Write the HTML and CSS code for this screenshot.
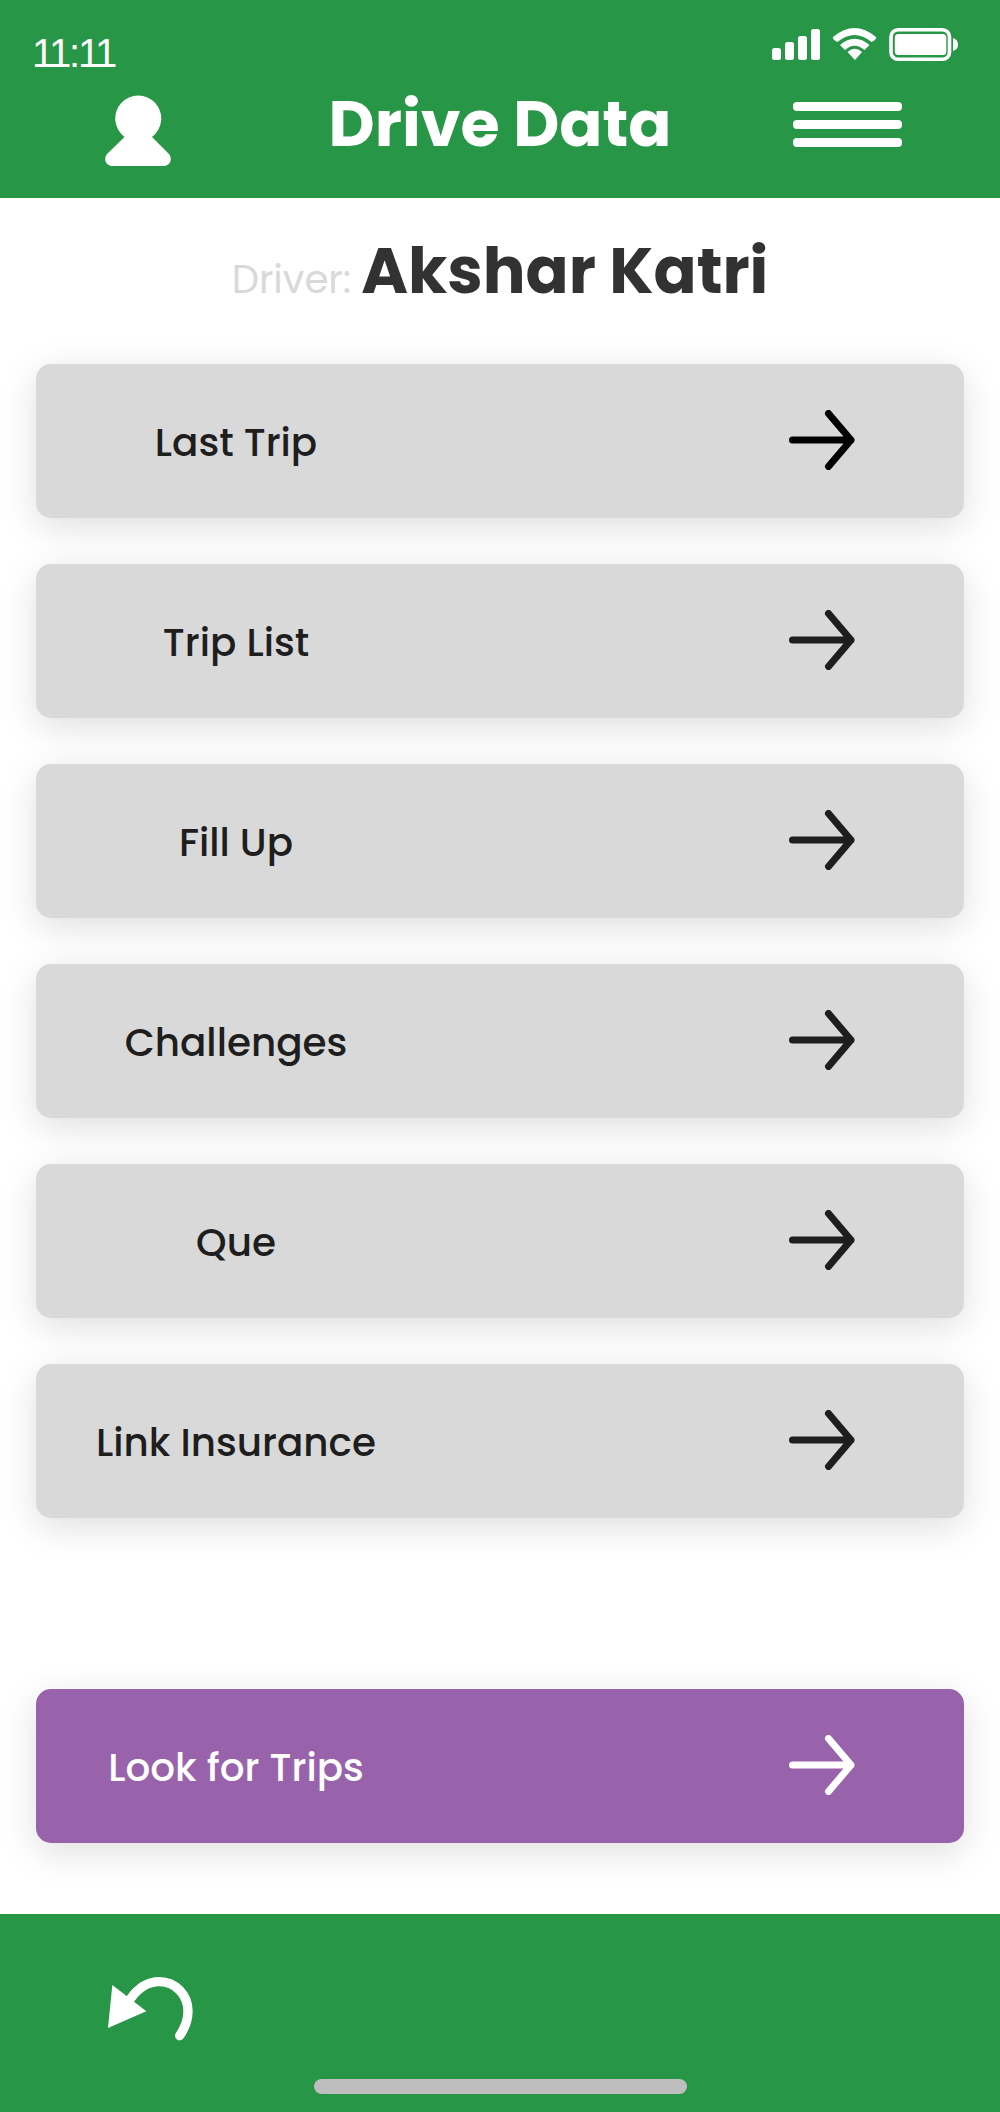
FILE: index.html
```html
<!DOCTYPE html>
<html lang="en">
<head>
    <meta charset="UTF-8">
    <meta name="viewport" content="width=device-width, initial-scale=1.0">
    <title>Drive Data</title>
    <link rel="stylesheet" href="styles.css">
</head>
<body>
    <header class="header">
        <div class="status-bar">
            <span class="time">11:11</span>
            <svg class="status-icons" width="188" height="34" viewBox="0 0 188 34" fill="white">
                <!-- signal -->
                <rect x="2" y="20" width="9" height="12" rx="2.5"/>
                <rect x="15" y="14" width="9" height="18" rx="2.5"/>
                <rect x="28" y="8" width="9" height="24" rx="2.5"/>
                <rect x="41" y="1" width="9" height="31" rx="2.5"/>
                <!-- wifi -->
                <path d="M63 9 Q84.5 -9 106 9 Q107 11 101.500 14 Q84.500 0 67.500 14 Q62 11 63 9Z"/>
                <path d="M70 17 Q84.500 4.500 99.500 17 L94.500 22 Q84.500 13.500 75 22Z"/>
                <path d="M77.500 24 Q84.800 17.500 92 24 L85 32Z"/>
                <!-- battery -->
                <rect x="121" y="1.800" width="58.500" height="29.500" rx="7" fill="none" stroke="white" stroke-width="3.600"/>
                <rect x="124.800" y="6" width="51.500" height="21" rx="3.500"/>
                <path d="M183 10 Q188 11.500 188 16.500 Q188 21.500 183 23Z"/>
            </svg>
        </div>
        <nav class="nav">
            <svg class="profile" width="66" height="71" viewBox="0 0 66 71" fill="white">
                <path d="M19.500 42 A23 23 0 1 1 47 42 L64 59 C68 64 65 71 58 71 H8 C1 71 -2 64 2 59Z"/>
            </svg>
            <h1>Drive Data</h1>
            <div class="menu">
                <span></span>
                <span></span>
                <span></span>
            </div>
        </nav>
    </header>

    <main class="container">
        <p class="driver">Driver: <strong>Akshar Katri</strong></p>

        <button class="first">
            <span>Last Trip</span>
            <svg class="arrow" viewBox="0 0 66 60"><path d="M3.500 30H62M39.500 3.500L62 30L39.500 56.500"/></svg>
        </button>
        <button>
            <span>Trip List</span>
            <svg class="arrow" viewBox="0 0 66 60"><path d="M3.500 30H62M39.500 3.500L62 30L39.500 56.500"/></svg>
        </button>
        <button>
            <span>Fill Up</span>
            <svg class="arrow" viewBox="0 0 66 60"><path d="M3.500 30H62M39.500 3.500L62 30L39.500 56.500"/></svg>
        </button>
        <button>
            <span>Challenges</span>
            <svg class="arrow" viewBox="0 0 66 60"><path d="M3.500 30H62M39.500 3.500L62 30L39.500 56.500"/></svg>
        </button>
        <button>
            <span>Que</span>
            <svg class="arrow" viewBox="0 0 66 60"><path d="M3.500 30H62M39.500 3.500L62 30L39.500 56.500"/></svg>
        </button>
        <button>
            <span>Link Insurance</span>
            <svg class="arrow" viewBox="0 0 66 60"><path d="M3.500 30H62M39.500 3.500L62 30L39.500 56.500"/></svg>
        </button>
        <button class="purple">
            <span>Look for Trips</span>
            <svg class="arrow" viewBox="0 0 66 60"><path d="M3.500 30H62M39.500 3.500L62 30L39.500 56.500"/></svg>
        </button>
    </main>

    <footer class="footer">
        <svg class="back" width="85" height="64" viewBox="145 233 255 192">
            <path d="M158 257L260 336L145 386Z" fill="white"/>
            <path d="M213 298C237 264 268 247 299 247C347 247 385 287 385 335C385 362 376 386 360 409" fill="none" stroke="white" stroke-width="28" stroke-linecap="round"/>
        </svg>
        <div class="home-bar"></div>
    </footer>
</body>
</html>
```
FILE: styles.css
```css
* {
    box-sizing: border-box;
}
body {
    font-family: "Poppins", "Inter", sans-serif;
    background-color: white;
    margin: 0;
    display: flex;
    flex-direction: column;
    height: 2112px;
}
.header {
    background-color: #289647;
    color: white;
    height: 198px;
}
.status-bar {
    display: flex;
    justify-content: space-between;
    height: 92px;
    padding: 28px 42px 0 32px;
}
.time {
    font-family: "Liberation Sans", Arial, sans-serif;
    font-size: 40px;
    line-height: 40px;
    letter-spacing: -2.2px;
    margin-top: 5px;
}
.nav {
    display: grid;
    grid-template-columns: 1fr auto 1fr;
    grid-template-rows: 64px;
    align-items: center;
    height: 64px;
    padding: 0 98px;
}
.profile {
    margin: 13px 0 0 7px;
}
h1 {
    font-size: 63.6px;
    line-height: 64px;
    font-weight: 700;
    margin: 0;
}
.menu {
    justify-self: end;
    display: flex;
    flex-direction: column;
    gap: 9px;
    width: 109px;
}
.menu span {
    height: 9px;
    border-radius: 4px;
    background-color: white;
}
.container {
    flex: 1;
    display: flex;
    flex-direction: column;
    gap: 46.5px;
    padding: 41px 36px 0;
}
.driver {
    margin: 0 0 14.5px;
    height: 64px;
    line-height: 64px;
    font-size: 38.6px;
    font-weight: 400;
    color: #d9d9d9;
    text-align: center;
}
.driver strong {
    font-size: 63.5px;
    font-weight: 700;
    color: #323232;
}
button {
    display: flex;
    align-items: center;
    height: 153.5px;
    padding: 0;
    border: none;
    border-radius: 15px;
    background-color: #d9d9d9;
    color: #1e1e1e;
    font-family: inherit;
    font-size: 38.9px;
    font-weight: 500;
    box-shadow: 0 9px 36px rgba(0, 0, 0, 0.13);
    cursor: pointer;
}
button span {
    width: 400px;
    padding-top: 3px;
    text-align: center;
}
.arrow {
    width: 66px;
    height: 60px;
    margin: 0 109px 2px auto;
    fill: none;
    stroke: currentColor;
    stroke-width: 7;
    stroke-linecap: round;
    stroke-linejoin: round;
}
.first .arrow {
    stroke: black;
}
.purple {
    background-color: #9863ab;
    color: white;
    margin-top: 125px;
}
.footer {
    display: flex;
    flex-direction: column;
    justify-content: space-between;
    height: 198px;
    padding: 63px 0 18px;
    background-color: #289647;
}
.back {
    margin-left: 108px;
}
.home-bar {
    align-self: center;
    width: 373px;
    height: 15px;
    border-radius: 8px;
    background-color: #bebebe;
}
```
